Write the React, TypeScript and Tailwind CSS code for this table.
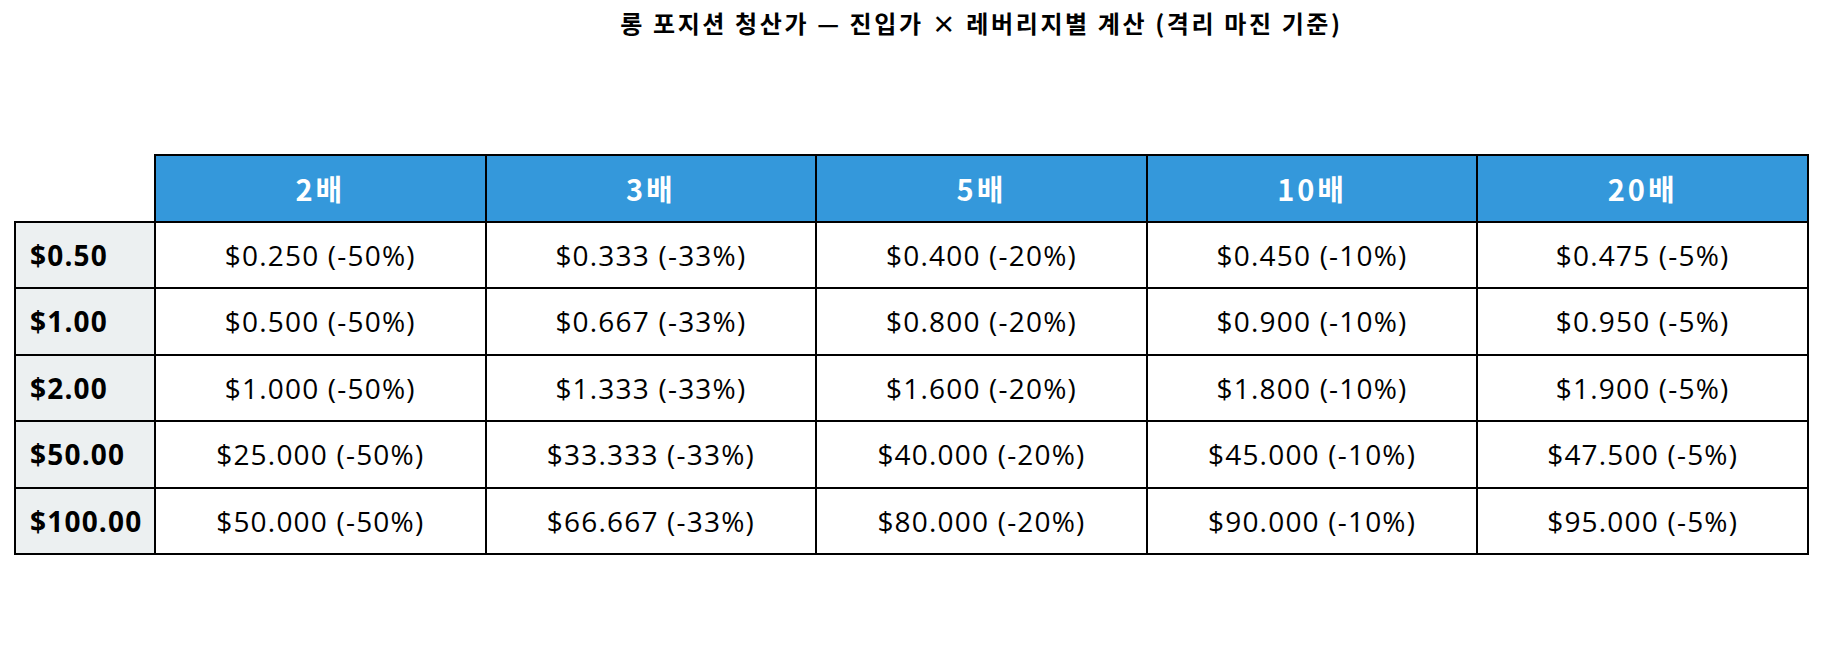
import React from "react";

const cols = ["2배", "3배", "5배", "10배", "20배"];
const rows: { label: string; cells: string[] }[] = [
  { label: "$0.50", cells: ["$0.250 (-50%)", "$0.333 (-33%)", "$0.400 (-20%)", "$0.450 (-10%)", "$0.475 (-5%)"] },
  { label: "$1.00", cells: ["$0.500 (-50%)", "$0.667 (-33%)", "$0.800 (-20%)", "$0.900 (-10%)", "$0.950 (-5%)"] },
  { label: "$2.00", cells: ["$1.000 (-50%)", "$1.333 (-33%)", "$1.600 (-20%)", "$1.800 (-10%)", "$1.900 (-5%)"] },
  { label: "$50.00", cells: ["$25.000 (-50%)", "$33.333 (-33%)", "$40.000 (-20%)", "$45.000 (-10%)", "$47.500 (-5%)"] },
  { label: "$100.00", cells: ["$50.000 (-50%)", "$66.667 (-33%)", "$80.000 (-20%)", "$90.000 (-10%)", "$95.000 (-5%)"] },
];

export default function App() {
  return (
    <div
      className="w-[1821px] h-[659px] bg-white text-black overflow-hidden"
      style={{ fontFamily: '"Open Sans", "Noto Sans CJK KR", sans-serif' }}
    >
      <div className="pt-[10px] pl-[142px] w-full text-center">
        <div
          className="text-[24px] leading-[26px] font-bold tracking-[2.6px]"
          style={{ fontFamily: '"Noto Sans CJK KR", sans-serif' }}
        >
          롱 포지션 청산가 — 진입가 × 레버리지별 계산 (격리 마진 기준)
        </div>
      </div>
      <div className="pl-[14px] mt-[118px]">
        <table className="border-collapse table-fixed w-[1793px]">
          <colgroup>
            <col className="w-[140px]" />
            <col className="w-[330.6px]" />
            <col className="w-[330.6px]" />
            <col className="w-[330.6px]" />
            <col className="w-[330.6px]" />
            <col className="w-[330.6px]" />
          </colgroup>
          <thead>
            <tr className="h-[66.5px]">
              <th className="p-0"></th>
              {cols.map((c) => (
                <th
                  key={c}
                  className="p-0 border-2 border-black bg-[#3498db] text-white text-[29px] font-bold text-center align-middle tracking-[3px]"
                  style={{ fontFamily: '"Noto Sans CJK KR", sans-serif' }}
                >
                  {c}
                </th>
              ))}
            </tr>
          </thead>
          <tbody>
            {rows.map((r) => (
              <tr key={r.label} className="h-[66.5px]">
                <td className="p-0 pl-[14px] border-2 border-black bg-[#ecf0f1] text-[28px] font-bold text-left align-middle tracking-[1.2px]">
                  {r.label}
                </td>
                {r.cells.map((c, i) => (
                  <td
                    key={i}
                    className="p-0 border-2 border-black text-[28px] text-center align-middle tracking-[1.2px]"
                  >
                    {c}
                  </td>
                ))}
              </tr>
            ))}
          </tbody>
        </table>
      </div>
    </div>
  );
}
